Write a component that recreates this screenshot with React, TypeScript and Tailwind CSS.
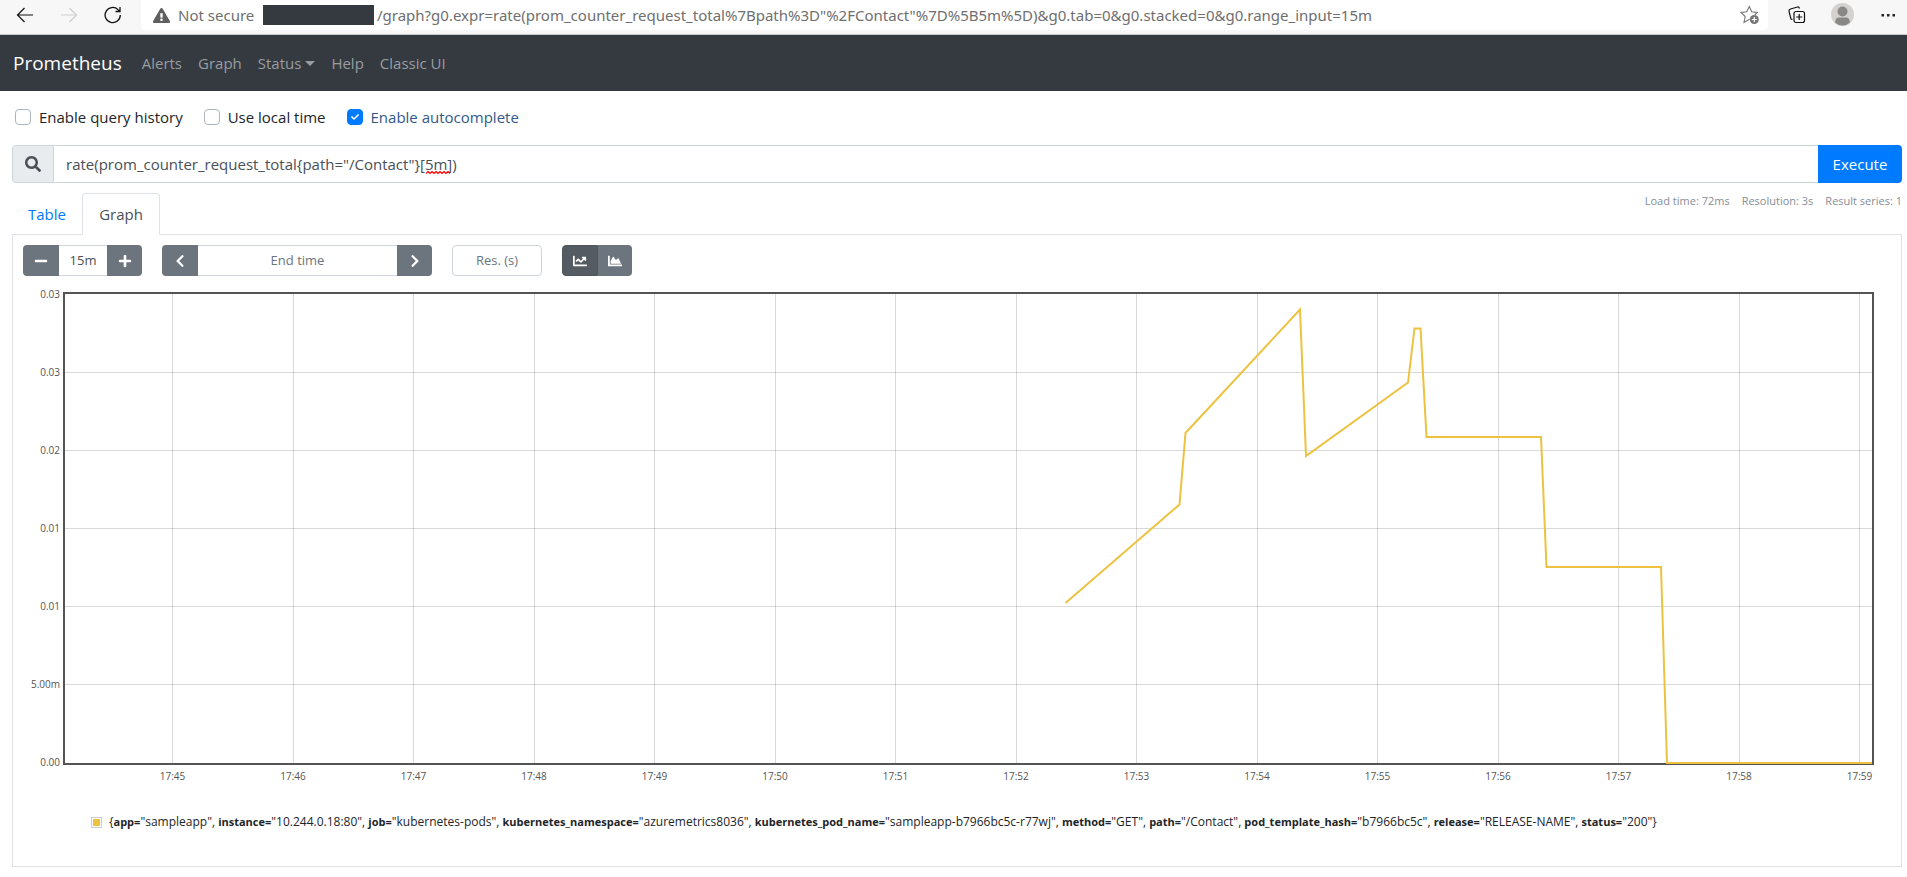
import React from "react";
import {
  FaSearch,
  FaMinus,
  FaPlus,
  FaChevronLeft,
  FaChevronRight,
  FaChartLine,
  FaChartArea,
  FaCheck,
  FaExclamationTriangle,
} from "react-icons/fa";

const NAV_LINK = "text-[15px] leading-6 text-[#9a9da0] hover:text-white";

function BrowserBar() {
  return (
    <header className="flex h-[35px] items-stretch border-b border-[#c8c9cb] bg-[#f7f7f7]">
      <div className="flex w-[141px] shrink-0 items-center pb-[5px] pl-4">
        <button aria-label="Back" className="flex w-11">
          <svg className="size-[18px]" viewBox="0 0 18 18" fill="none" stroke="#111" strokeWidth="1.2">
            <path d="M17 9H1.5M8.5 2 1.5 9l7 7" />
          </svg>
        </button>
        <button aria-label="Forward" disabled className="flex w-11">
          <svg className="size-[18px]" viewBox="0 0 18 18" fill="none" stroke="#cfcfcf" strokeWidth="1.2">
            <path d="M1 9h15.5M9.5 2l7 7-7 7" />
          </svg>
        </button>
        <button aria-label="Reload" className="flex">
          <svg className="size-[18px]" viewBox="0 0 18 18" fill="none" stroke="#111" strokeWidth="1.3">
            <path d="M16.3 9A7.6 7.6 0 1 1 14 3.6l1.5 1.7M16 1v4.5h-4.5" />
          </svg>
        </button>
      </div>
      <div className="mb-1 flex flex-1 items-center rounded-b bg-white pl-3 pr-2 font-['Noto_Sans','Open_Sans',sans-serif] text-[15px] text-[#6f6f6f]">
        <FaExclamationTriangle className="mr-2 size-[17px] text-[#5f5f5f]" />
        <span className="w-[85px]">Not secure</span>
        <span className="mr-[3px] h-5 w-[111px] bg-[#343a40]" />
        <span className="flex-1 whitespace-nowrap">
          /graph?g0.expr=rate(prom_counter_request_total%7Bpath%3D"%2FContact"%7D%5B5m%5D)&amp;g0.tab=0&amp;g0.stacked=0&amp;g0.range_input=15m
        </span>
        <button aria-label="Add to favorites">
          <svg className="size-5" viewBox="0 0 20 20" fill="none" stroke="#767676" strokeWidth="1.1">
            <path d="M9.5 14.2 4 17.5l1.2-6L1 7.5l5.7-.7L9.3 1.5l2.4 5.3 5.6.7-2.5 2.3" />
            <circle cx="14.3" cy="14.5" r="4.5" fill="#767676" stroke="none" />
            <path d="M14.3 12v5M11.8 14.5h5" stroke="#fff" strokeWidth="1.2" />
          </svg>
        </button>
      </div>
      <div className="flex w-[139px] shrink-0 items-center justify-between pb-[5px] pl-5 pr-[10px]">
        <button aria-label="Collections">
          <svg className="size-[18px]" viewBox="0 0 18 18" fill="none" stroke="#111" strokeWidth="1.2">
            <path d="M4.5 13.5 3 13 1 5.5Q.7 3.5 2.500 3l7-2q1.5-.3 2 1.5" />
            <rect x="6" y="5.5" width="10.5" height="11" rx="2" />
            <path d="M11.2 8v6M8.2 11h6" />
          </svg>
        </button>
        <button aria-label="Profile">
          <svg className="size-[23px]" viewBox="0 0 23 23">
            <circle cx="11.5" cy="11.5" r="11.5" fill="#d4d2d0" />
            <circle cx="11.5" cy="8.5" r="5" fill="#8a8886" />
            <path d="M4 19.5Q4.5 14.5 8 14.5h7q3.5 0 4 5a11 11 0 0 1-15 0z" fill="#8a8886" />
          </svg>
        </button>
        <button aria-label="Settings and more">
          <svg className="h-4 w-[18px]" viewBox="0 0 18 16" fill="#222">
            <path d="M2.5 7H5v2.5H2.5zM8 7h2.5v2.5H8zM13.5 7H16v2.5h-2.5z" />
          </svg>
        </button>
      </div>
    </header>
  );
}

function NavBar() {
  return (
    <nav className="flex h-14 items-center bg-[#343a40] pl-[13px]">
      <a href="#home" className="mr-5 text-[19px] leading-8 text-white">
        Prometheus
      </a>
      <div className="flex items-center gap-4">
        <a href="#alerts" className={NAV_LINK}>Alerts</a>
        <a href="#graph" className={NAV_LINK}>Graph</a>
        <button className="flex items-center gap-1 text-[15px] leading-6 text-[#9a9da0]">
          Status
          <span className="border-x-[5px] border-t-[5px] border-x-transparent border-t-[#9a9da0]" />
        </button>
        <a href="#help" className={NAV_LINK}>Help</a>
        <a href="#classic" className={NAV_LINK}>Classic UI</a>
      </div>
    </nav>
  );
}

function Option({ id, label, checked }: { id: string; label: string; checked?: boolean }) {
  return (
    <label htmlFor={id} className="flex items-center gap-2 text-[15px] leading-6 text-[#212529] has-checked:text-[#32598a]">
      <span className="grid size-4 place-items-center">
        <input
          id={id}
          type="checkbox"
          defaultChecked={checked}
          className="peer col-start-1 row-start-1 size-4 appearance-none rounded border border-[#adb5bd] bg-white checked:border-[#007bff] checked:bg-[#007bff]"
        />
        <FaCheck className="pointer-events-none col-start-1 row-start-1 hidden size-2 text-white peer-checked:block" />
      </span>
      {label}
    </label>
  );
}

const GREY_BUTTON = "flex items-center justify-center bg-[#6c757d] text-white";

function Controls() {
  return (
    <div className="flex h-[31px] items-stretch gap-5 text-[13px] text-[#495057]">
      <div className="flex">
        <button aria-label="Decrease range" className={GREY_BUTTON + " w-9 rounded-l"}>
          <FaMinus className="size-[14px]" />
        </button>
        <input aria-label="Range" defaultValue="15m" className="w-12 border-y border-[#ced4da] text-center outline-none" />
        <button aria-label="Increase range" className={GREY_BUTTON + " w-[35px] rounded-r"}>
          <FaPlus className="size-[14px]" />
        </button>
      </div>
      <div className="flex">
        <button aria-label="Earlier" className={GREY_BUTTON + " w-9 rounded-l"}>
          <FaChevronLeft className="size-[14px]" />
        </button>
        <input
          aria-label="End time"
          placeholder="End time"
          className="w-[199px] border-y border-[#ced4da] text-center outline-none placeholder:text-[#6c757d]"
        />
        <button aria-label="Later" className={GREY_BUTTON + " w-[35px] rounded-r"}>
          <FaChevronRight className="size-[14px]" />
        </button>
      </div>
      <input
        aria-label="Resolution in seconds"
        placeholder="Res. (s)"
        className="w-[90px] rounded border border-[#ced4da] text-center outline-none placeholder:text-[#6c757d]"
      />
      <div className="flex">
        <button aria-label="Line graph" className="flex w-9 items-center justify-center rounded-l border border-[#4e555b] bg-[#545b62] text-white">
          <FaChartLine className="size-[14px]" />
        </button>
        <button aria-label="Stacked graph" className={GREY_BUTTON + " w-[34px] rounded-r"}>
          <FaChartArea className="size-[14px]" />
        </button>
      </div>
    </div>
  );
}

const PLOT_W = 1807;
const PLOT_H = 469;
const X_TICKS = Array.from({ length: 15 }, (_, i) => ({
  label: "17:" + (45 + i),
  x: (((107.5 + i * 120.5) / PLOT_W) * 100).toFixed(3) + "%",
}));
const Y_TICKS = ["0.03", "0.03", "0.02", "0.01", "0.01", "5.00m", "0.00"].map((label, i) => ({ label, y: i * 78 + 0.5 }));
const SERIES =
  "1000.5,309 1114.5,210.5 1120.5,139 1235,15.5 1241,162 1343,88.5 1349.5,34.5 1355.5,34.5 1361.5,143 1476,143 1481.5,273 1596,273 1602,469 1807,469";

function Chart() {
  return (
    <div className="mt-4 ml-[40px] mr-[19px] border-2 border-[#545454]">
      <svg className="block h-[469px] w-full overflow-visible" role="img" aria-label="Request rate over time">
        <g stroke="#000" strokeOpacity="0.15" shapeRendering="crispEdges">
          {X_TICKS.map((t) => (
            <line key={t.label} x1={t.x} x2={t.x} y1="0" y2={PLOT_H} />
          ))}
          {Y_TICKS.slice(1, 6).map((t) => (
            <line key={t.y} x1="0" x2="100%" y1={t.y} y2={t.y} />
          ))}
        </g>
        <svg width="100%" height={PLOT_H} viewBox="0 0 1807 469" preserveAspectRatio="none" overflow="visible">
          <polyline points={SERIES} fill="none" stroke="#edc240" strokeWidth="2" vectorEffect="non-scaling-stroke" />
        </svg>
        <g fill="#545454" className="text-[10px]">
          {X_TICKS.map((t) => (
            <text key={t.label} x={t.x} y="486" textAnchor="middle">
              {t.label}
            </text>
          ))}
          {Y_TICKS.map((t) => (
            <text key={t.y} x="-5" y={t.y + 3} textAnchor="end">
              {t.label}
            </text>
          ))}
        </g>
      </svg>
    </div>
  );
}

const LABELS = [
  ["app", "sampleapp"],
  ["instance", "10.244.0.18:80"],
  ["job", "kubernetes-pods"],
  ["kubernetes_namespace", "azuremetrics8036"],
  ["kubernetes_pod_name", "sampleapp-b7966bc5c-r77wj"],
  ["method", "GET"],
  ["path", "/Contact"],
  ["pod_template_hash", "b7966bc5c"],
  ["release", "RELEASE-NAME"],
  ["status", "200"],
];

function Legend() {
  return (
    <div className="mt-[47px] flex items-center pl-[68px] text-[12px] leading-5 text-[#212529]">
      <span className="mr-[7px] size-[11px] shrink-0 border border-[#ccc] p-px">
        <span className="block size-full bg-[#edc240]" />
      </span>
      <p>
        {"{"}
        {LABELS.map(([name, value], i) => (
          <React.Fragment key={name}>
            {i > 0 && ", "}
            <strong className="text-[11px] font-bold">{name}=</strong>"{value}"
          </React.Fragment>
        ))}
        {"}"}
      </p>
    </div>
  );
}

export default function App() {
  return (
    <div className="bg-white font-['Open_Sans','Noto_Sans',sans-serif]">
      <BrowserBar />
      <NavBar />
      <main className="pb-[10px] pl-3 pr-[5px]">
        <div className="flex gap-[21px] pt-[14px] pl-[3px]">
          <Option id="history" label="Enable query history" />
          <Option id="local" label="Use local time" />
          <Option id="autocomplete" label="Enable autocomplete" checked />
        </div>
        <div className="mt-4 flex h-[38px]">
          <label htmlFor="expr" className="flex w-[42px] items-center justify-center rounded-l border border-[#ced4da] bg-[#e9ecef]">
            <FaSearch className="size-4 text-[#495057]" />
          </label>
          <div className="relative flex flex-1 items-center border-y border-[#ced4da] pl-3">
            <input
              id="expr"
              aria-label="Expression"
              spellCheck={false}
              defaultValue={'rate(prom_counter_request_total{path="/Contact"}[5m])'}
              className="w-full text-[15px] text-[#495057] outline-none"
            />
            <svg className="pointer-events-none absolute bottom-2 left-[372px] h-[3px] w-6" viewBox="0 0 24 3" fill="none" stroke="#ff0000" strokeWidth="1.2">
              <path d="M0 2.5 2 .5l2 2 2-2 2 2 2-2 2 2 2-2 2 2 2-2 2 2 2-2 2 2" />
            </svg>
          </div>
          <button className="w-[84px] rounded-r bg-[#007bff] text-[15px] text-white">Execute</button>
        </div>
        <div className="flex items-start justify-between pt-[10px]">
          <div className="-mb-px flex text-[15px] leading-6">
            <button className="w-[70px] border border-transparent pb-2 pt-2 text-[#007bff]">Table</button>
            <button className="w-[78px] rounded-t border border-[#dee2e6] border-b-white bg-white pb-2 pt-2 text-[#495057]">Graph</button>
          </div>
          <div className="flex gap-3 text-[11px] leading-4 text-[#868e96]">
            <span>Load time: 72ms</span>
            <span>Resolution: 3s</span>
            <span>Result series: 1</span>
          </div>
        </div>
        <section className="border border-[#dee2e6] pb-[34px] pl-[10px] pr-2 pt-[10px]">
          <Controls />
          <Chart />
          <Legend />
        </section>
      </main>
    </div>
  );
}
